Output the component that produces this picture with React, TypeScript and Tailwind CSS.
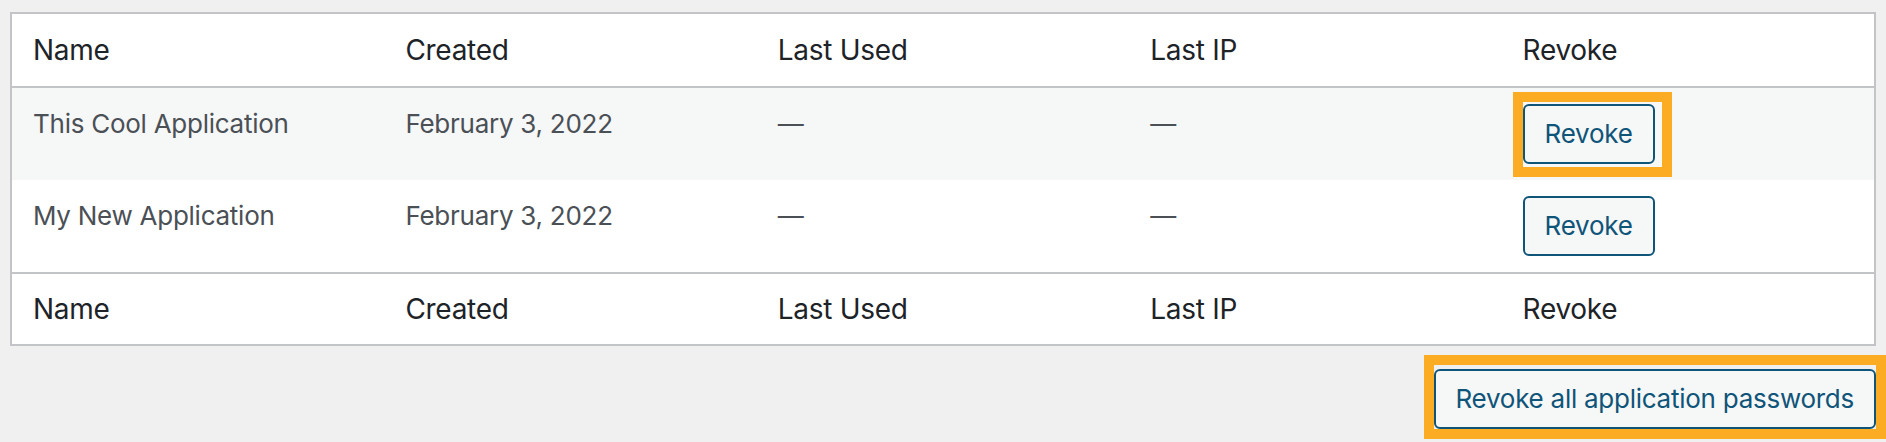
import React from "react";

const font = { fontFamily: 'Inter, "Noto Sans", "Liberation Sans", sans-serif' };

const headers = ["Name", "Created", "Last Used", "Last IP", "Revoke"];

function RevokeButton({ label }: { label: string }) {
  return (
    <button className="h-[60px] rounded-[6px] border-2 border-[#0f5479] bg-[#f6f7f7] px-[20px] text-[26px] leading-[56px] tracking-[-0.01em] text-[#0f5479]">
      {label}
    </button>
  );
}

function Highlight({ children, className }: { children: React.ReactNode; className: string }) {
  return (
    <span className="relative inline-block align-top">
      <span className={"pointer-events-none absolute border-[10px] border-[#fbac23] " + className} />
      <span className="relative block">{children}</span>
    </span>
  );
}

function HeadRow({ top }: { top?: boolean }) {
  return (
    <tr>
      {headers.map((h) => (
        <th
          key={h}
          className={
            "pl-[21px] pr-[20px] text-left text-[28px] font-normal leading-[40px] tracking-[-0.01em] text-[#1d2327] " +
            (top ? "py-4 border-b-2 border-[#c3c4c7]" : "pt-[15px] pb-[15px] border-t-2 border-[#c3c4c7]")
          }
        >
          {h}
        </th>
      ))}
    </tr>
  );
}

const rows = [
  { name: "This Cool Application", created: "February 3, 2022", striped: true },
  { name: "My New Application", created: "February 3, 2022", striped: false },
];

const cell = "pl-[21px] pr-[20px] py-4 align-top text-[26px] leading-[39px] tracking-[-0.01em] text-[#4a5056]";

export default function App() {
  return (
    <div className="min-h-screen bg-[#f0f0f1] px-[10px] pt-[12px]" style={font}>
      <div className="border-2 border-[#c3c4c7] bg-white">
        <table className="w-full table-fixed border-separate border-spacing-0">
          <thead>
            <HeadRow top />
          </thead>
          <tbody>
            {rows.map((r, i) => (
              <tr key={r.name} className={r.striped ? "bg-[#f6f7f7]" : "bg-white"}>
                <td className={cell}>{r.name}</td>
                <td className={cell}>{r.created}</td>
                <td className={cell}>—</td>
                <td className={cell}>—</td>
                <td className="pl-[21px] pr-[20px] py-4 align-top">
                  {i === 0 ? (
                    <Highlight className="-left-[10px] -top-[12px] -right-[17px] -bottom-[13px]">
                      <RevokeButton label="Revoke" />
                    </Highlight>
                  ) : (
                    <RevokeButton label="Revoke" />
                  )}
                </td>
              </tr>
            ))}
          </tbody>
          <tfoot>
            <HeadRow />
          </tfoot>
        </table>
      </div>
      <div className="mt-[23px] flex justify-end">
        <Highlight className="-left-[10px] -top-[14px] -right-[10px] -bottom-[10px]">
          <RevokeButton label="Revoke all application passwords" />
        </Highlight>
      </div>
    </div>
  );
}
